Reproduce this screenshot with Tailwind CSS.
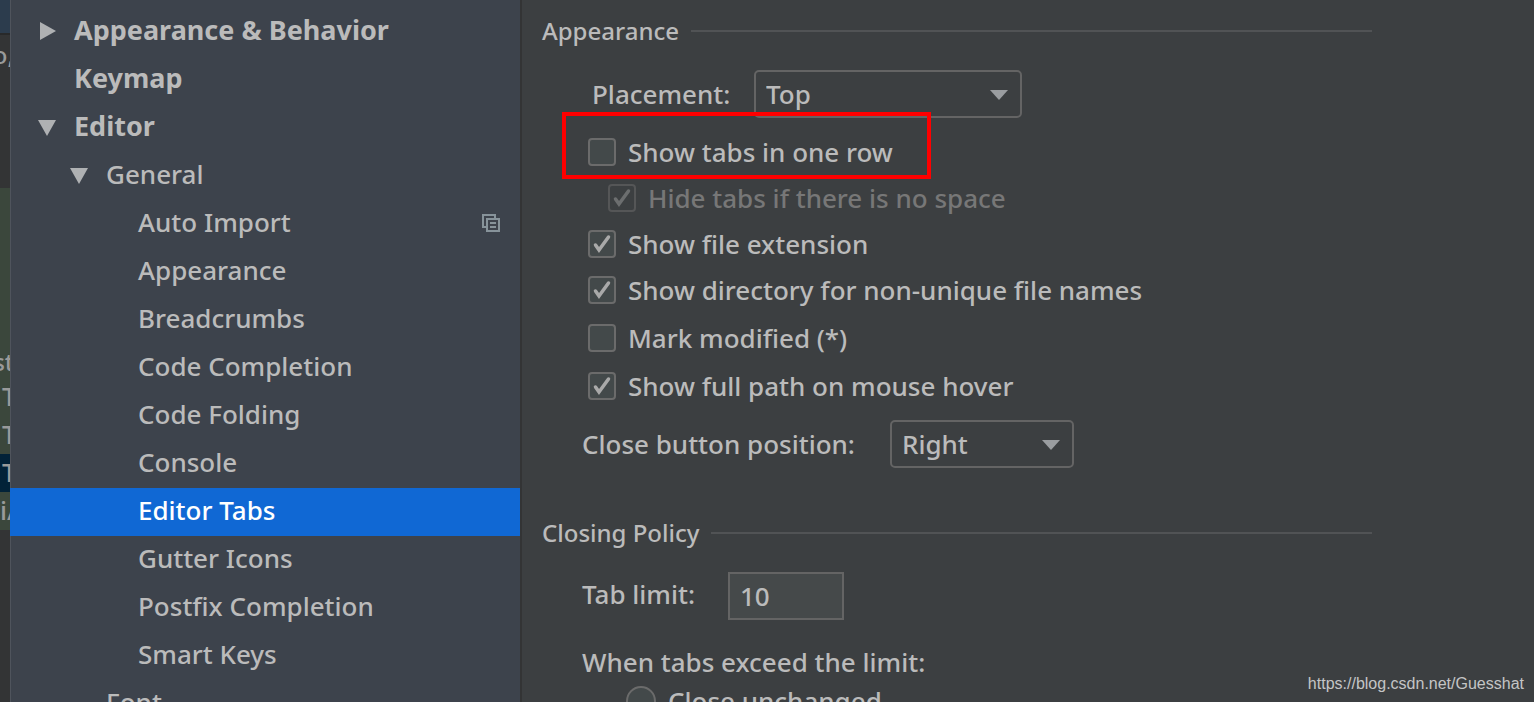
<!DOCTYPE html>
<html lang="en">
<head>
<meta charset="utf-8">
<meta name="viewport" content="width=device-width, initial-scale=1">
<title>Preferences – Editor Tabs</title>
<script src="https://cdn.jsdelivr.net/npm/@tailwindcss/browser@4"></script>
</head>
<body class="relative flex h-screen overflow-hidden bg-[#3c3f41] font-['Noto_Sans',sans-serif] text-[26px] leading-8 font-medium text-[#bbbbbb]">

  <!-- Sliver of the editor window behind the dialog -->
  <div class="flex w-2.5 shrink-0 flex-col overflow-hidden bg-[#333435] text-[#999a9a]" aria-hidden="true">
    <div class="h-[35px] shrink-0 border-b-2 border-[#28292a] bg-[#2c3c4d]"></div>
    <div class="-mr-1 flex h-[153px] shrink-0 items-start justify-end pt-1 text-2xl"><span>o,</span></div>
    <div class="-mr-1 flex h-[190px] shrink-0 items-end justify-end bg-[#3b473c] text-2xl"><span>st</span></div>
    <div class="h-[38px] shrink-0 bg-[#3b473c] pt-0.5 pl-0.5">T</div>
    <div class="h-[38px] shrink-0 bg-[#3b473c] pt-0.5 pl-0.5">T</div>
    <div class="h-[38px] shrink-0 bg-[#022238] pt-0.5 pl-0.5">T</div>
    <div class="h-[38px] shrink-0 bg-[#3b473c] pt-0.5">i/</div>
  </div>

  <!-- Settings tree -->
  <nav class="w-[512px] shrink-0 overflow-hidden border-r-2 border-[#333435] bg-[#3d434c] pt-2 shadow-[inset_1px_0_0_#4f545c]">
    <ul class="flex flex-col">
      <li><a href="#" class="flex h-12 items-center pb-1 pl-7 text-[27px] font-bold">
        <svg class="mr-4 size-5" viewBox="0 0 20 20" fill="#afb1b3" aria-hidden="true"><path d="M2 2l16 9-16 9z"/></svg>Appearance &amp; Behavior</a></li>
      <li><a href="#" class="flex h-12 items-center pb-1 pl-16 text-[27px] font-bold">Keymap</a></li>
      <li><a href="#" class="flex h-12 items-center pb-1 pl-7 text-[27px] font-bold">
        <svg class="mr-4 size-5" viewBox="0 0 20 20" fill="#afb1b3" aria-hidden="true"><path d="M0 4h18l-9 16z"/></svg>Editor</a></li>
      <li><a href="#" class="flex h-12 items-center pb-1 pl-[60px]">
        <svg class="mr-4 size-5" viewBox="0 0 20 20" fill="#afb1b3" aria-hidden="true"><path d="M0 4h18l-9 16z"/></svg>General</a></li>
      <li><a href="#" class="flex h-12 items-center justify-between pr-5 pb-1 pl-32">Auto Import
        <svg class="h-5 w-[18px]" viewBox="0 0 18 20" fill="none" stroke="#87939a" stroke-width="2" aria-hidden="true"><path d="M13 6V3H1v12h3M5 7h12v12H5zM8 11h6M8 15h6"/></svg></a></li>
      <li><a href="#" class="flex h-12 items-center pb-1 pl-32">Appearance</a></li>
      <li><a href="#" class="flex h-12 items-center pb-1 pl-32">Breadcrumbs</a></li>
      <li><a href="#" class="flex h-12 items-center pb-1 pl-32">Code Completion</a></li>
      <li><a href="#" class="flex h-12 items-center pb-1 pl-32">Code Folding</a></li>
      <li><a href="#" class="flex h-12 items-center pb-1 pl-32">Console</a></li>
      <li><a href="#" aria-current="page" class="flex h-12 items-center bg-[#1068d4] pb-1 pl-32 text-white">Editor Tabs</a></li>
      <li><a href="#" class="flex h-12 items-center pb-1 pl-32">Gutter Icons</a></li>
      <li><a href="#" class="flex h-12 items-center pb-1 pl-32">Postfix Completion</a></li>
      <li><a href="#" class="flex h-12 items-center pb-1 pl-32">Smart Keys</a></li>
      <li><a href="#" class="flex h-12 items-center pb-1 pl-24">Font</a></li>
    </ul>
  </nav>

  <main class="min-w-0 grow overflow-hidden pt-[7px] pr-[162px] pl-5">
    <section>
      <h2 class="flex h-12 items-center gap-3 text-2xl">Appearance<span class="h-0.5 grow bg-[#515355]"></span></h2>

      <div class="mt-[15px] flex h-12 items-center pl-[50px]">
        <label for="placement" class="w-[162px]">Placement:</label>
        <div class="relative">
          <select id="placement" class="h-12 w-[268px] appearance-none rounded-[5px] border-2 border-[#646464] pl-2.5 outline-none">
            <option>Top</option><option>Bottom</option><option>Left</option><option>Right</option>
          </select>
          <svg class="pointer-events-none absolute top-5 right-3.5 h-2.5 w-[18px]" viewBox="0 0 18 10" fill="#9a9da0" aria-hidden="true"><path d="M0 0h18l-9 10z"/></svg>
        </div>
      </div>

      <div class="mt-[11px] flex flex-col pl-[46px]">
        <div class="relative flex h-[46px] items-center">
          <label class="flex items-center gap-3"><input type="checkbox" class="size-7 appearance-none rounded-[4px] border-2 border-[#6b6b6b] bg-[#43494a]">Show tabs in one row</label>
          <span class="pointer-events-none absolute -top-[17px] -left-[26px] h-[67px] w-[369px] border-4 border-[#ff0000]"></span>
        </div>
        <div class="flex h-[46px] items-center pl-5">
          <label class="flex items-center gap-3 text-[#777777]"><span class="grid"><input type="checkbox" checked disabled class="col-start-1 row-start-1 size-7 appearance-none rounded-[4px] border-2 border-[#555657]"><svg class="pointer-events-none col-start-1 row-start-1 size-7" viewBox="0 0 28 28" fill="none" stroke="#6c6e6f" stroke-width="3.500" stroke-linecap="round" aria-hidden="true"><path d="M7.500 15l3.500 5L20.500 7"/></svg></span>Hide tabs if there is no space</label>
        </div>
        <div class="flex h-[46px] items-center">
          <label class="flex items-center gap-3"><span class="grid"><input type="checkbox" checked class="col-start-1 row-start-1 size-7 appearance-none rounded-[4px] border-2 border-[#6b6b6b] bg-[#43494a]"><svg class="pointer-events-none col-start-1 row-start-1 size-7" viewBox="0 0 28 28" fill="none" stroke="#a9a9a9" stroke-width="3.500" stroke-linecap="round" aria-hidden="true"><path d="M7.500 15l3.500 5L20.500 7"/></svg></span>Show file extension</label>
        </div>
        <div class="flex h-[46px] items-center">
          <label class="flex items-center gap-3"><span class="grid"><input type="checkbox" checked class="col-start-1 row-start-1 size-7 appearance-none rounded-[4px] border-2 border-[#6b6b6b] bg-[#43494a]"><svg class="pointer-events-none col-start-1 row-start-1 size-7" viewBox="0 0 28 28" fill="none" stroke="#a9a9a9" stroke-width="3.500" stroke-linecap="round" aria-hidden="true"><path d="M7.500 15l3.500 5L20.500 7"/></svg></span>Show directory for non-unique file names</label>
        </div>
        <div class="mt-px flex h-12 items-center">
          <label class="flex items-center gap-3"><input type="checkbox" class="size-7 appearance-none rounded-[4px] border-2 border-[#6b6b6b] bg-[#43494a]">Mark modified (*)</label>
        </div>
        <div class="flex h-12 items-center">
          <label class="flex items-center gap-3"><span class="grid"><input type="checkbox" checked class="col-start-1 row-start-1 size-7 appearance-none rounded-[4px] border-2 border-[#6b6b6b] bg-[#43494a]"><svg class="pointer-events-none col-start-1 row-start-1 size-7" viewBox="0 0 28 28" fill="none" stroke="#a9a9a9" stroke-width="3.500" stroke-linecap="round" aria-hidden="true"><path d="M7.500 15l3.500 5L20.500 7"/></svg></span>Show full path on mouse hover</label>
        </div>
      </div>

      <div class="mt-2.5 flex h-12 items-center pl-10">
        <label for="close-position" class="w-[308px]">Close button position:</label>
        <div class="relative">
          <select id="close-position" class="h-12 w-[184px] appearance-none rounded-[5px] border-2 border-[#646464] pl-2.5 outline-none">
            <option>Right</option><option>Left</option><option>None</option>
          </select>
          <svg class="pointer-events-none absolute top-5 right-3.5 h-2.5 w-[18px]" viewBox="0 0 18 10" fill="#9a9da0" aria-hidden="true"><path d="M0 0h18l-9 10z"/></svg>
        </div>
      </div>
    </section>

    <section class="mt-[41px]">
      <h2 class="flex h-12 items-center gap-3 text-2xl">Closing Policy<span class="h-0.5 grow bg-[#515355]"></span></h2>
      <div class="mt-[15px] flex h-12 items-center pl-10">
        <label for="tab-limit" class="w-[146px] pb-1">Tab limit:</label>
        <input id="tab-limit" type="text" value="10" class="h-12 w-[116px] border-2 border-[#646464] bg-[#45494a] pl-2.5 outline-none">
      </div>
      <fieldset class="mt-[18px] pl-10">
        <legend class="flex h-12 items-center">When tabs exceed the limit:</legend>
        <label class="flex h-[30px] items-center gap-3 pl-11"><input type="radio" name="exceed" class="size-[30px] appearance-none rounded-full border-2 border-[#6b6b6b] bg-[#43494a]">Close unchanged</label>
      </fieldset>
    </section>
  </main>

  <p class="absolute right-2.5 bottom-0.5 font-['Liberation_Sans',sans-serif] text-base leading-8 font-normal text-[#c4c5c6]">https://blog.csdn.net/Guesshat</p>
</body>
</html>
